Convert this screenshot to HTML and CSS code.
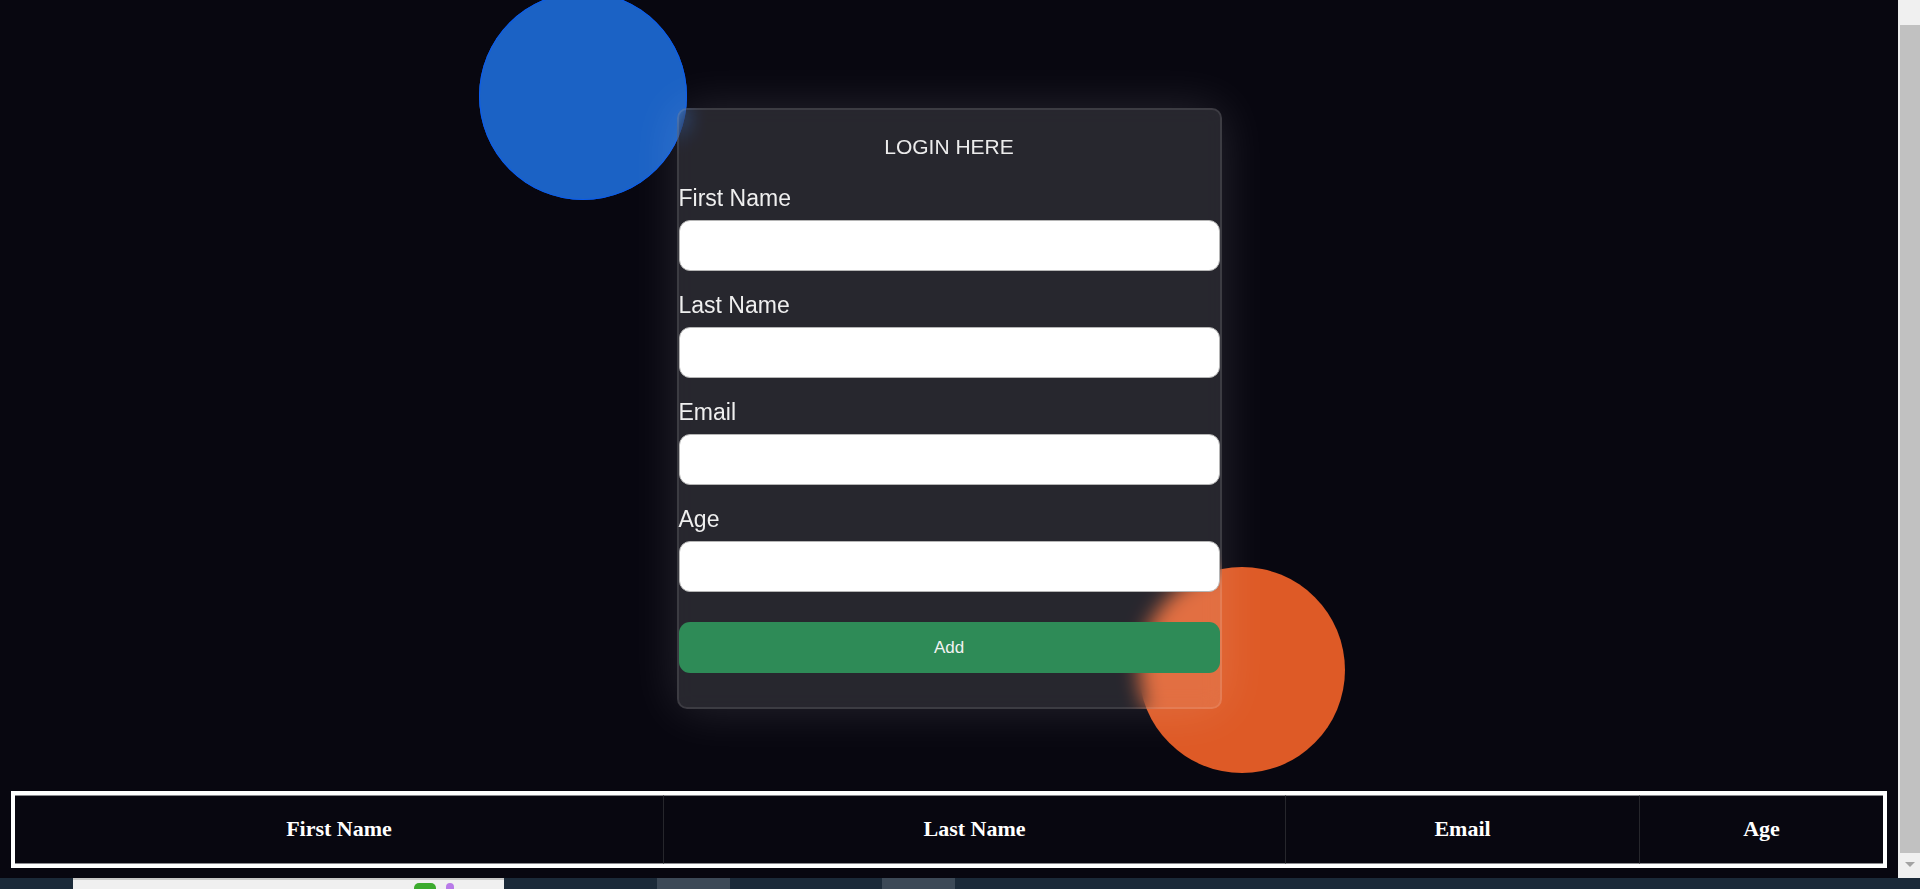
FILE: index.html
```html
<!DOCTYPE html>
<html lang="en">
<head>
    <meta charset="UTF-8">
    <meta name="viewport" content="width=device-width, initial-scale=1.0">
    <title>Users</title>
    <link rel="stylesheet" href="styles.css">
</head>
<body>

    <div class="screen">
        <div class="page">

            <div class="stage">
                <div class="form-wrap">
                    <div class="shape shape-blue"></div>
                    <div class="shape shape-orange"></div>

                    <form class="login-form" id="userForm">
                        <h3 class="form-title">LOGIN HERE</h3>

                        <label for="firstName">First Name</label>
                        <input type="text" id="firstName" name="firstName">

                        <label for="lastName">Last Name</label>
                        <input type="text" id="lastName" name="lastName">

                        <label for="email">Email</label>
                        <input type="text" id="email" name="email">

                        <label for="age">Age</label>
                        <input type="text" id="age" name="age">

                        <button type="submit" class="btn-add">Add</button>
                    </form>
                </div>
            </div>

            <table class="user-table">
                <colgroup>
                    <col class="col-first">
                    <col class="col-last">
                    <col class="col-email">
                    <col class="col-age">
                </colgroup>
                <thead>
                    <tr>
                        <th>First Name</th>
                        <th>Last Name</th>
                        <th>Email</th>
                        <th>Age</th>
                    </tr>
                </thead>
                <tbody id="userRows"></tbody>
            </table>

        </div>

        <!-- window scrollbar -->
        <div class="scrollbar">
            <div class="scroll-thumb"></div>
            <div class="scroll-arrow"></div>
        </div>
    </div>

    <!-- desktop taskbar -->
    <div class="taskbar">
        <div class="task-search">
            <span class="task-icon green"></span>
            <span class="task-icon violet"></span>
        </div>
        <div class="task-app"></div>
        <div class="task-app"></div>
    </div>

</body>
</html>
```

FILE: styles.css
```css
* {
    box-sizing: border-box;
}

body {
    margin: 0;
    padding: 0;
    height: 100vh;
    overflow: hidden;
    display: flex;
    flex-direction: column;
    background-color: #080710;
    font-family: "Liberation Sans", Arial, sans-serif;
}

.screen {
    flex: 1;
    display: flex;
    min-height: 0;
}

.page {
    flex: 1;
    display: flex;
    flex-direction: column;
    padding: 108px 11px 0;
}

.stage {
    display: flex;
    justify-content: center;
}

.form-wrap {
    position: relative;
    width: 545px;
}

/* background circles */
.shape {
    position: absolute;
    width: 208px;
    height: 208px;
    border-radius: 50%;
}

.shape-blue {
    background-color: #1b62c5;
    left: -198px;
    top: -116px;
    box-shadow: inset 0 0 0 1px #0a5cf0;
}

.shape-orange {
    background-color: #de5a26;
    left: 462px;
    top: 459px;
    width: 206px;
    height: 206px;
}

.login-form {
    position: relative;
    display: flex;
    flex-direction: column;
    width: 545px;
    padding: 24px 0 34px;
    background-color: rgba(255, 255, 255, 0.13);
    border: 2px solid rgba(255, 255, 255, 0.1);
    border-radius: 10px;
    backdrop-filter: blur(10px);
    box-shadow: 0 0 50px rgba(255, 255, 255, 0.13);
}

.form-title {
    margin: 0 0 24px;
    font-size: 21px;
    line-height: 26px;
    font-weight: 400;
    text-align: center;
    color: #ececec;
}

.login-form label {
    display: block;
    margin-top: 20px;
    margin-bottom: 9px;
    padding-top: 1px;
    font-size: 23px;
    line-height: 26px;
    color: #efefef;
}

.login-form .form-title + label {
    margin-top: 0;
}

.login-form input {
    width: 100%;
    height: 51px;
    padding: 0 12px;
    border: 1px solid #b5b5b5;
    border-radius: 11px;
    background-color: #fff;
    font-size: 18px;
    outline: none;
}

.btn-add {
    width: 100%;
    height: 51px;
    margin-top: 30px;
    border: none;
    border-radius: 11px;
    background-color: #2e8b57;
    color: #f2f2f2;
    font-family: "Liberation Sans", Arial, sans-serif;
    font-size: 17px;
    cursor: pointer;
}

/* users table */
.user-table {
    width: 100%;
    margin-top: 82px;
    border-collapse: separate;
    border-spacing: 0;
    table-layout: fixed;
    border: 4px solid #fff;
    color: #fff;
}

.col-first { width: 648px; }
.col-last { width: 622px; }
.col-email { width: 354px; }
.col-age { width: 244px; }

.user-table th {
    height: 69px;
    padding: 0 0 2px;
    font-family: "Liberation Serif", "Times New Roman", serif;
    font-size: 22px;
    font-weight: 700;
    text-align: center;
    border-top: 1px solid #8a8a8f;
    border-bottom: 1px solid #8a8a8f;
    border-left: 1px solid #26262c;
}

.user-table th:first-child {
    border-left: none;
}

/* scrollbar + taskbar */
.scrollbar {
    width: 22px;
    display: flex;
    flex-direction: column;
    align-items: flex-end;
    padding: 25px 0 0;
    background-color: #f0f0f0;
}

.scroll-thumb {
    width: 20px;
    height: 828px;
    background-color: #c1c1c1;
}

.scroll-arrow {
    width: 0;
    height: 0;
    margin: 9px 5px 0 0;
    border-left: 5px solid transparent;
    border-right: 5px solid transparent;
    border-top: 5px solid #a3a3a3;
}

.taskbar {
    height: 11px;
    display: flex;
    align-items: flex-end;
    background-color: #1b2a39;
}

.task-search {
    display: flex;
    align-items: flex-end;
    justify-content: flex-end;
    gap: 10px;
    width: 431px;
    height: 11px;
    margin-left: 73px;
    padding-right: 50px;
    background-color: #f0f0f0;
    border-top: 2px solid #c8c8c8;
}

.task-icon {
    width: 22px;
    height: 6px;
    border-radius: 5px 5px 0 0;
}

.task-icon.green { background-color: #3cab2e; }
.task-icon.violet { width: 8px; background-color: #b87ae8; }

.task-app {
    width: 73px;
    height: 11px;
    margin-left: 153px;
    background-color: #3c4957;
}

.task-app + .task-app {
    margin-left: 152px;
}
```
